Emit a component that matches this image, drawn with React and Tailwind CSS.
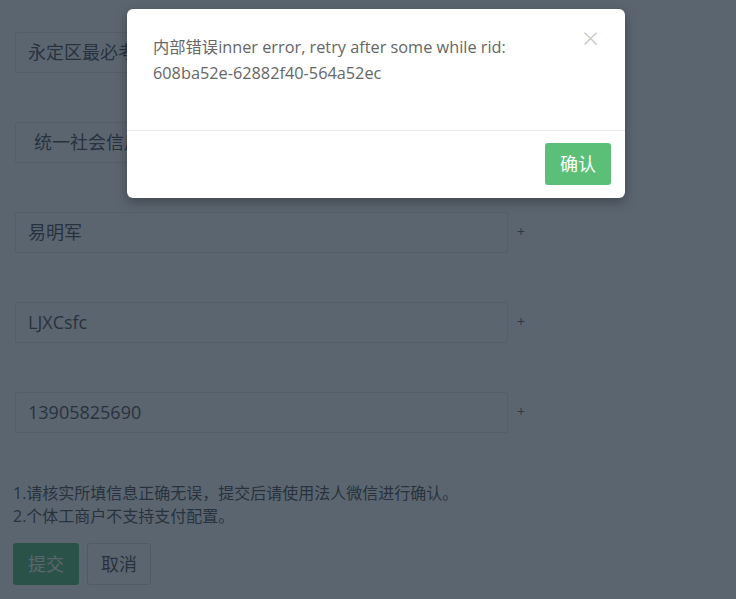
import React from "react";

const font = { fontFamily: '"Open Sans", "Noto Sans CJK SC", sans-serif' };

function Field({ value, indent }) {
  return (
    <div className="flex items-center h-[90px]">
      <div className={`w-[493px] h-[41px] ml-[15px] border border-[#e6e6e6] rounded-[2px] flex items-center text-[18px] text-[#555] overflow-hidden whitespace-nowrap ${indent ? "pl-[18px]" : "pl-[12px]"}`}>
        {value}
      </div>
      <span className="ml-[9px] text-[#666] text-[14px] leading-none">+</span>
    </div>
  );
}

export default function App() {
  return (
    <div className="relative w-[736px] h-[599px] bg-white overflow-hidden" style={font}>
      <div className="pt-[7px]">
        <Field value="永定区最必考网络科技有限公司" />
        <Field value="统一社会信用代码" indent />
        <Field value="易明军" />
        <Field value="LJXCsfc" />
        <Field value="13905825690" />
        <div className="mt-[25px] pl-[13px] text-[16px] leading-[23px] text-[#555]">
          <p>1.请核实所填信息正确无误，提交后请使用法人微信进行确认。</p>
          <p>2.个体工商户不支持支付配置。</p>
        </div>
        <div className="flex gap-[8px] pl-[13px] mt-[15px]">
          <button className="w-[66px] h-[42px] rounded-[3px] bg-[#5cbf78] text-white text-[18px]">提交</button>
          <button className="w-[64px] h-[42px] rounded-[3px] border border-[#ddd] bg-white text-[#555] text-[18px]">取消</button>
        </div>
      </div>

      <div className="absolute inset-0 bg-[rgba(21,35,51,0.7)]" />

      <div className="absolute left-[127px] top-[9px] w-[498px] h-[189px] bg-white rounded-[6px] shadow-[0_4px_12px_rgba(0,0,0,0.3)] flex flex-col">
        <div className="relative h-[121px] pl-[26px] pt-[25px] pr-[40px] text-[16.3px] leading-[26px] text-[#666]">
          <p>内部错误inner error, retry after some while rid:</p>
          <p>608ba52e-62882f40-564a52ec</p>
          <span className="absolute right-[26px] top-[14px] text-[#c8c8c8] text-[30px] leading-none font-light">×</span>
        </div>
        <div className="border-t border-[#e8e8e8] flex justify-end items-start pt-[12px] pr-[14px]">
          <button className="w-[66px] h-[42px] rounded-[3px] bg-[#5cbf78] text-white text-[18px]">确认</button>
        </div>
      </div>
    </div>
  );
}
